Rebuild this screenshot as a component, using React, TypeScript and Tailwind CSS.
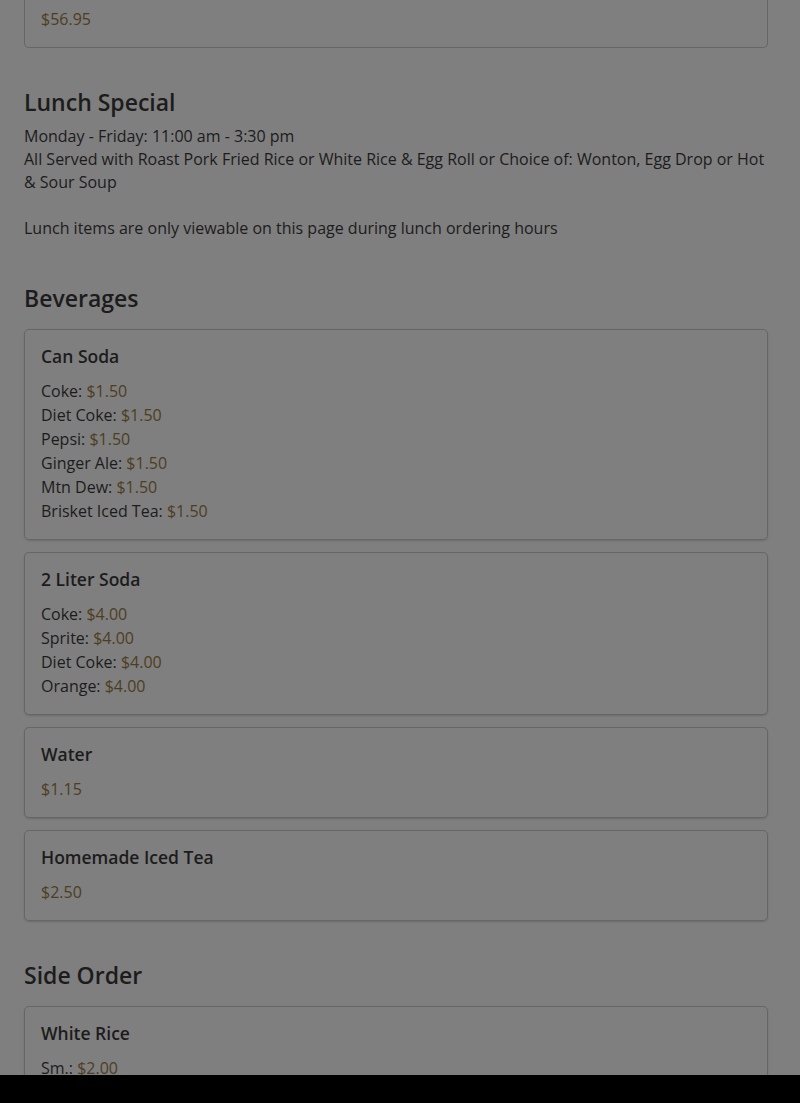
type Item = { label?: string; price: string };
type Dish = { name: string; items: Item[] };

const beverages: Dish[] = [
  {
    name: "Can Soda",
    items: [
      { label: "Coke", price: "$1.50" },
      { label: "Diet Coke", price: "$1.50" },
      { label: "Pepsi", price: "$1.50" },
      { label: "Ginger Ale", price: "$1.50" },
      { label: "Mtn Dew", price: "$1.50" },
      { label: "Brisket Iced Tea", price: "$1.50" },
    ],
  },
  {
    name: "2 Liter Soda",
    items: [
      { label: "Coke", price: "$4.00" },
      { label: "Sprite", price: "$4.00" },
      { label: "Diet Coke", price: "$4.00" },
      { label: "Orange", price: "$4.00" },
    ],
  },
  { name: "Water", items: [{ price: "$1.15" }] },
  { name: "Homemade Iced Tea", items: [{ price: "$2.50" }] },
];

const sideOrders: Dish[] = [{ name: "White Rice", items: [{ label: "Sm.", price: "$2.00" }] }];

function PriceLine({ item }: { item: Item }) {
  return (
    <p className="text-[16px] leading-[24px]">
      {item.label ? <span>{item.label}: </span> : null}
      <span className="text-[#4d3d22]">{item.price}</span>
    </p>
  );
}

function DishCard({ dish }: { dish: Dish }) {
  return (
    <div className="rounded-[5px] border border-[#666666] p-4 shadow-[0_1px_2px_rgba(0,0,0,0.15)]">
      <h5 className="mb-3 text-[17.5px] font-semibold leading-[21px]">{dish.name}</h5>
      {dish.items.map((item, i) => (
        <PriceLine key={i} item={item} />
      ))}
    </div>
  );
}

function Section({
  title,
  className = "mt-10",
  children,
}: {
  title: string;
  className?: string;
  children: React.ReactNode;
}) {
  return (
    <section className={className}>
      <h3 className="mb-4 text-[23px] font-semibold leading-[29px]">{title}</h3>
      {children}
    </section>
  );
}

export default function App() {
  return (
    <div
      className="flex h-[1103px] flex-col overflow-hidden bg-[#7f7f7f] text-[#1c1c1c]"
      style={{ fontFamily: '"Open Sans", sans-serif' }}
    >
      <main className="flex-1 overflow-hidden pl-6 pr-8">
        <div className="rounded-b-[5px] border border-t-0 border-[#666666] px-4 pb-4 pt-[7px]">
          <p className="text-[16px] leading-[24px] text-[#4d3d22]">$56.95</p>
        </div>

        <Section title="Lunch Special">
          <div className="-mt-[8px] text-[16px] leading-[23px]">
            <p>Monday - Friday: 11:00 am - 3:30 pm</p>
            <p>
              All Served with Roast Pork Fried Rice or White Rice &amp; Egg Roll or Choice of: Wonton, Egg Drop or Hot
              &amp; Sour Soup
            </p>
            <p className="mt-[23px]">Lunch items are only viewable on this page during lunch ordering hours</p>
          </div>
        </Section>

        <Section title="Beverages" className="mt-[44px]">
          <div className="flex flex-col gap-3">
            {beverages.map((d) => (
              <DishCard key={d.name} dish={d} />
            ))}
          </div>
        </Section>

        <Section title="Side Order">
          <div className="flex flex-col gap-3">
            {sideOrders.map((d) => (
              <DishCard key={d.name} dish={d} />
            ))}
          </div>
        </Section>
      </main>
      <div className="h-[28px] shrink-0 bg-black" />
    </div>
  );
}
